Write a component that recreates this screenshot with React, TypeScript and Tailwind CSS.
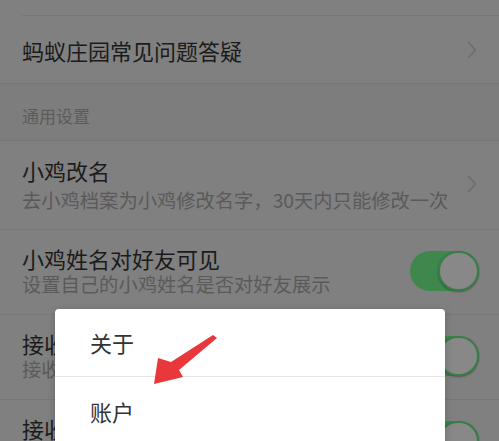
import React, { FC } from "react";

const font = { fontFamily: '"Noto Sans CJK SC", "Noto Sans", sans-serif' };

const Chevron: FC = () => (
  <svg width="10" height="18" viewBox="0 0 10 18" className="shrink-0">
    <path d="M1.5 1.5 L8.5 9 L1.5 16.5" fill="none" stroke="#6c6c6c" strokeWidth="1.6" strokeLinecap="round" strokeLinejoin="round" />
  </svg>
);

const Toggle: FC = () => (
  <div className="relative w-[69px] h-[40px] rounded-full bg-[#3e884e] shrink-0">
    <div className="absolute right-0 top-0 w-[41px] h-[40px] rounded-full bg-[#888888] border-[2px] border-[#3b7d49] shadow-[0_1px_2px_rgba(0,0,0,0.35)]" />
  </div>
);

interface RowProps {
  title: string;
  sub?: string;
  right: "chevron" | "toggle";
  className?: string;
  gap?: string;
}

const Row: FC<RowProps> = ({ title, sub, right, className, gap }) => (
  <div className={`flex items-center pl-[22px] pr-[20px] border-b border-[#777777] ${className ?? ""}`}>
    <div className={`flex-1 flex flex-col ${gap ?? ""}`}>
      <p className="text-[22px] leading-[26px] text-[#1b1b1b] whitespace-nowrap">{title}</p>
      {sub && <p className="text-[19.3px] leading-[24px] text-[#5a5a5a] whitespace-nowrap">{sub}</p>}
    </div>
    {right === "chevron" ? <div className="pr-[2px]"><Chevron /></div> : <Toggle />}
  </div>
);

export default function App() {
  return (
    <div className="relative w-full h-[441px] overflow-hidden bg-[#808080]" style={font}>
      <div className="h-[16px] ml-[22px] border-b border-[#777777]" />
      <Row title="蚂蚁庄园常见问题答疑" right="chevron" className="h-[67px] border-b-0" />
      <div className="h-[58px] flex items-center pl-[22px] pt-[8px] bg-[#7d7d7d] border-t border-b border-[#787878]">
        <p className="text-[17px] text-[#5c5c5c]">通用设置</p>
      </div>
      <Row title="小鸡改名" sub="去小鸡档案为小鸡修改名字，30天内只能修改一次" right="chevron" className="h-[89px] pb-[2px]" gap="gap-[5px]" />
      <Row title="小鸡姓名对好友可见" sub="设置自己的小鸡姓名是否对好友展示" right="toggle" className="h-[85px] pb-[3px]" gap="gap-[1px]" />
      <Row title="接收好友互动提醒" sub="接收好友与小鸡互动的消息提醒" right="toggle" className="h-[85px] pb-[3px]" gap="gap-[1px]" />
      <Row title="接收好友喂养通知" sub="接收好友帮忙喂养小鸡的通知" right="toggle" className="h-[85px] pb-[3px]" gap="gap-[1px]" />

      {/* popup menu */}
      <div className="absolute left-[55px] top-[309px] w-[390px] bg-white rounded-[4px] shadow-[0_2px_8px_rgba(0,0,0,0.2)]">
        <div className="h-[68px] flex items-center pl-[35px] border-b border-[#e6e6e6]">
          <span className="text-[22px] text-[#333333]">关于</span>
        </div>
        <div className="h-[68px] flex items-center pl-[35px]">
          <span className="text-[22px] text-[#333333]">账户</span>
        </div>
      </div>

      {/* red arrow */}
      <svg className="absolute left-[140px] top-[325px]" width="85" height="65" viewBox="0 0 85 65">
        <polygon points="73,10 77,13 39,45 43,52 14,59 18,33 31,37" fill="#e8383b" strokeLinejoin="round" />
      </svg>
    </div>
  );
}
